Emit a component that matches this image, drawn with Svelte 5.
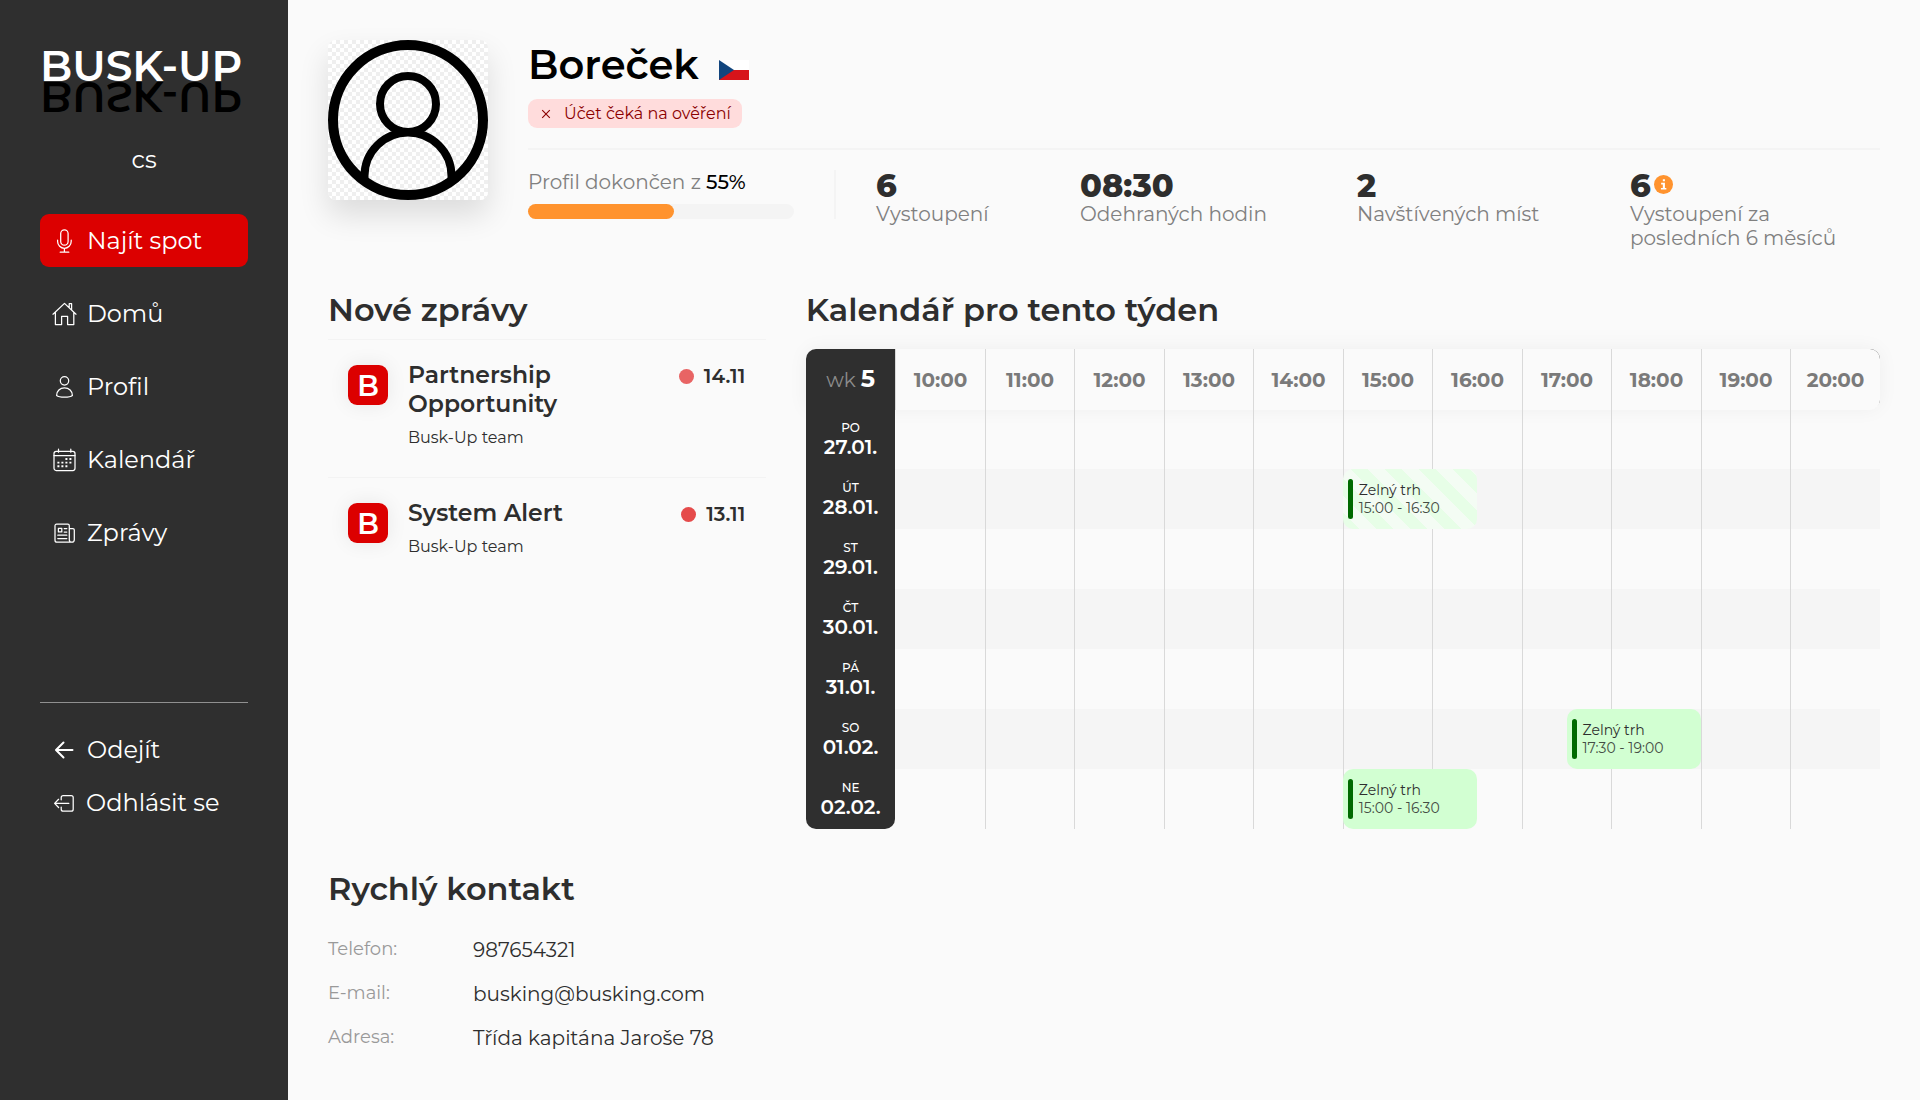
<script>
  const nav = [
    { icon: 'mic', label: 'Najít spot', active: true },
    { icon: 'home', label: 'Domů' },
    { icon: 'user', label: 'Profil' },
    { icon: 'calendar', label: 'Kalendář' },
    { icon: 'news', label: 'Zprávy' }
  ];
  const exits = [
    { icon: 'back', label: 'Odejít' },
    { icon: 'logout', label: 'Odhlásit se' }
  ];
  const completion = 55;
  const stats = [
    { value: '6', label: 'Vystoupení' },
    { value: '08:30', label: 'Odehraných hodin' },
    { value: '2', label: 'Navštívených míst' },
    { value: '6', label: 'Vystoupení za posledních 6 měsíců', info: true }
  ];
  const messages = [
    { title: 'Partnership Opportunity', date: '14.11' },
    { title: 'System Alert', date: '13.11', fresh: true }
  ];
  const hours = ['10:00', '11:00', '12:00', '13:00', '14:00', '15:00', '16:00', '17:00', '18:00', '19:00', '20:00'];
  const days = [
    { name: 'PO', date: '27.01.', events: [] },
    { name: 'ÚT', date: '28.01.', events: [{ from: 15, to: 16.5, time: '15:00 - 16:30', pending: true }] },
    { name: 'ST', date: '29.01.', events: [] },
    { name: 'ČT', date: '30.01.', events: [] },
    { name: 'PÁ', date: '31.01.', events: [] },
    { name: 'SO', date: '01.02.', events: [{ from: 17.5, to: 19, time: '17:30 - 19:00' }] },
    { name: 'NE', date: '02.02.', events: [{ from: 15, to: 16.5, time: '15:00 - 16:30' }] }
  ];
  const contacts = [
    { label: 'Telefon:', value: '987654321' },
    { label: 'E-mail:', value: 'busking@busking.com' },
    { label: 'Adresa:', value: 'Třída kapitána Jaroše 78' }
  ];
  // The first of the twelve columns holds the dates, so 10:00 starts at 1/12.
  const column = (hour) => ((hour - 9) / 12) * 100;
</script>

{#snippet icon(name)}
  <svg class="icon" viewBox="0 0 24 24" aria-hidden="true">
    {#if name === 'mic'}
      <rect x="8.7" y="0.8" width="7.4" height="15.4" rx="3.7" />
      <path d="M5.6 11.2v1.3a6.8 6.8 0 0 0 13.6 0v-1.3M12.4 19.3V23M8.2 23.2h8.6" />
    {:else if name === 'home'}
      <path d="M1 12.2 12.5 1.4 24 12.2M3.4 10.5v12h6.2v-8.2h6v8.2h6.2v-12M17.2 5.5V1.7h2.4V8" />
    {:else if name === 'user'}
      <circle cx="12.5" cy="5.8" r="4.2" />
      <path d="M4.6 20.4c0-4.3 3.4-7.6 7.9-7.6s7.9 3.3 7.9 7.6c-2.6 2.2-13.2 2.2-15.8 0z" />
    {:else if name === 'calendar'}
      <rect x="2" y="3.3" width="21" height="19.2" rx="2.2" />
      <path d="M2 7.6h21M6.5 1.2v3M18.8 1.2v3" />
      <path class="dots" d="M13.4 11h2M17.4 11h2M5.4 14.6h2M9.4 14.6h2M13.4 14.6h2M17.4 14.6h2M5.4 18.3h2M9.4 18.3h2M13.4 18.3h2" />
    {:else if name === 'news'}
      <path d="M20.3 21.2H5a2 2 0 0 1-2-2V4.7a1.5 1.5 0 0 1 1.5-1.5h11.3a1.5 1.5 0 0 1 1.5 1.5v14a2.5 2.5 0 0 0 5 0V9a1.5 1.5 0 0 0-1.5-1.5h-3.5" />
      <path d="M6.4 7.3h3.4v3.6H6.4zM12.2 7.5h2.6M12.2 11h2.6M5.8 14.2h9M5.8 17.5h9" />
    {:else if name === 'back'}
      <path class="bold" d="M20.5 12H4.2M11.5 4.5 4 12l7.5 7.5" />
    {:else}
      <path d="M9.2 8.8V6.6a2 2 0 0 1 2-2h8a2 2 0 0 1 2 2v11.6a2 2 0 0 1-2 2h-8a2 2 0 0 1-2-2V16M16.8 12.4H2.8M6.6 8.3 2.6 12.4l4 4.1" />
    {/if}
  </svg>
{/snippet}

<div class="app">
  <aside>
    <div class="logo">
      <div>BUSK-UP</div>
      <div class="mirror" aria-hidden="true">BUSK-UP</div>
    </div>
    <div class="lang">cs</div>
    <nav>
      {#each nav as item}
        <div class="link" class:active={item.active}>{@render icon(item.icon)}<span>{item.label}</span></div>
      {/each}
    </nav>
    <div class="exits">
      {#each exits as item}
        <div class="link">{@render icon(item.icon)}<span>{item.label}</span></div>
      {/each}
    </div>
  </aside>

  <main>
    <header>
      <svg class="avatar" viewBox="0 0 160 160" aria-hidden="true">
        <defs>
          <pattern id="checker" width="8" height="8" patternUnits="userSpaceOnUse">
            <rect width="8" height="8" fill="#fff" />
            <path d="M0 0h4v4H0zM4 4h4v4H4z" fill="#efefef" />
          </pattern>
        </defs>
        <rect width="160" height="160" fill="url(#checker)" />
        <g fill="none" stroke="#000">
          <circle cx="80" cy="80" r="75" stroke-width="10" />
          <circle cx="80" cy="64" r="28" stroke-width="8" />
          <path d="M36.5 142v-6a43.5 43.5 0 0 1 87 0v6" stroke-width="8" />
        </g>
      </svg>
      <div class="summary">
        <div class="who">
          <h1>Boreček</h1>
          <svg class="flag" viewBox="0 0 30 20" aria-hidden="true">
            <path fill="#fff" d="M0 0h30v10H0z" />
            <path fill="#d7141a" d="M0 10h30v10H0z" />
            <path fill="#11457e" d="M0 0l15 10L0 20z" />
          </svg>
        </div>
        <div class="badge">
          <svg viewBox="0 0 10 10" aria-hidden="true"><path d="M1.2 1.2l7.6 7.6M8.8 1.2l-7.6 7.6" /></svg>
          <span>Účet čeká na ověření</span>
        </div>
        <div class="figures">
          <div class="progress">
            <p>Profil dokončen z <b>{completion}%</b></p>
            <div class="track"><div class="fill" style="width: {completion}%"></div></div>
          </div>
          <div class="stats">
            {#each stats as s}
              <div>
                <div class="value">
                  <span>{s.value}</span>
                  {#if s.info}
                    <svg class="info" viewBox="0 0 20 20" aria-hidden="true">
                      <circle cx="10" cy="10" r="10" />
                      <path d="M9.3 4.5h2.2v2.2H9.3zM7.5 8.2h4v5.4H13v1.7H7.3v-1.7h2V9.9H7.5z" />
                    </svg>
                  {/if}
                </div>
                <div class="label">{s.label}</div>
              </div>
            {/each}
          </div>
        </div>
      </div>
    </header>

    <div class="columns">
      <section class="news">
        <h2>Nové zprávy</h2>
        {#each messages as m}
          <article>
            <div class="mark">B</div>
            <div class="body">
              <h3>{m.title}</h3>
              <p>Busk-Up team</p>
            </div>
            <div class="when"><i class:fresh={m.fresh}></i><span>{m.date}</span></div>
          </article>
        {/each}
      </section>

      <section>
        <h2>Kalendář pro tento týden</h2>
        <div class="calendar">
          <div class="row head">
            <div class="corner"><span>wk</span><b>5</b></div>
            {#each hours as h}<div class="hour">{h}</div>{/each}
          </div>
          {#each days as d}
            <div class="row day">
              <div class="date"><small>{d.name}</small><span>{d.date}</span></div>
              {#each hours as h}<div class="cell"></div>{/each}
              {#each d.events as e}
                <div
                  class="event"
                  class:pending={e.pending}
                  style="left: calc({column(e.from)}% + 0.6px); width: calc({column(e.to) - column(e.from)}% - 0.8px)"
                >
                  <div><span>Zelný trh</span><span class="time">{e.time}</span></div>
                </div>
              {/each}
            </div>
          {/each}
        </div>
      </section>
    </div>

    <section>
      <h2>Rychlý kontakt</h2>
      <dl>
        {#each contacts as c}
          <div><dt>{c.label}</dt><dd>{c.value}</dd></div>
        {/each}
      </dl>
    </section>
  </main>
</div>

<style>
  :global(body) {
    background: #fafafa;
    color: #2e2e2e;
    font-family: Montserrat, Inter, sans-serif;
  }
  h1, h2, h3, p, dl, dd { margin: 0; }
  .app { display: flex; height: 1100px; }

  /* Sidebar */
  aside { width: 208px; flex: none; padding: 45.5px 40px 0; height: 1054.5px; background: #2f2f2f; color: #fff; }
  .logo { font-size: 42.4px; line-height: 40px; font-weight: 600; white-space: nowrap; }
  .mirror { transform: scaleY(-1); color: #000; margin-top: -8.5px; }
  .lang { margin-top: 28px; font-size: 24px; line-height: 29px; text-align: center; }
  nav { display: grid; gap: 20px; margin-top: 40px; }
  .link { display: flex; align-items: center; gap: 11px; height: 53px; padding-left: 12px; border-radius: 9px; font-size: 24px; line-height: 29px; white-space: nowrap; }
  .link.active { background: #dc0000; }
  .icon { width: 24px; height: 24px; flex: none; overflow: visible; fill: none; stroke: #fff; stroke-width: 1.25; stroke-linecap: round; stroke-linejoin: round; }
  .icon .dots { stroke-width: 1.9; stroke-linecap: butt; }
  .icon .bold { stroke-width: 2; }
  .exits { border-top: 1px solid #909090; margin-top: 143px; padding-top: 20px; }
  .exits .link:last-child { gap: 10px; }

  main { flex: 1; padding: 40px 40px 0; }

  /* Profile header */
  header { display: flex; gap: 40px; height: 250px; }
  .avatar { width: 160px; height: 160px; border-radius: 8px; flex: none; box-shadow: 0 15px 30px rgba(0, 0, 0, 0.12); }
  .summary { flex: 1; }
  .who { display: flex; gap: 20px; height: 59px; }
  h1 { font-size: 40px; line-height: 49px; font-weight: 600; color: #000; }
  .flag { width: 30px; height: 20px; margin-top: 20px; }
  .badge { display: flex; align-items: center; width: 214px; height: 29px; box-sizing: border-box; padding-left: 13px; border-radius: 9px; background: #ffdcdc; color: #8b0000; font-size: 16px; line-height: 19px; white-space: nowrap; }
  .badge svg { width: 10px; height: 10px; margin: 1px 13px 0 0; stroke: #8b0000; stroke-width: 1.1; }
  .figures { display: flex; margin-top: 20px; border-top: 2px solid #f4f4f4; padding-top: 20px; }
  .progress { width: 266px; height: 49px; padding-right: 40px; border-right: 2px solid #f4f4f4; font-size: 20px; line-height: 24px; color: #808080; white-space: nowrap; }
  .progress b { color: #000; font-weight: 500; }
  .track { height: 15px; margin-top: 10px; border-radius: 8px; background: #f4f4f4; }
  .fill { height: 100%; border-radius: 8px; background: #ff932e; }
  .stats { flex: 1; display: grid; grid-template-columns: 204px 277px 273px auto; padding-left: 40px; }
  .value { display: flex; font-size: 32px; line-height: 32px; font-weight: 800; }
  .info { width: 19px; height: 19px; margin: 5px 0 0 3px; fill: #ff932e; }
  .info path { fill: #fff; }
  .label { font-size: 20px; line-height: 24px; color: #808080; max-width: 212px; }

  /* Messages */
  .columns { display: grid; grid-template-columns: 437.8px 1074px; gap: 40px; height: 579px; }
  h2 { font-size: 32px; line-height: 39px; font-weight: 600; }
  .news h2 { margin-bottom: 10px; }
  article { display: flex; border-top: 1px solid #f3f3f3; padding: 20px 20.5px 30px 20px; }
  .mark { width: 40px; height: 40px; margin-top: 5px; border-radius: 9px; background: #dc0000; color: #fff; font-size: 28.5px; line-height: 42px; font-weight: 600; text-align: center; box-shadow: 0 0 20px rgba(0, 0, 0, 0.08); }
  .body { width: 180px; margin-left: 20px; }
  h3 { font-size: 23.5px; line-height: 29px; font-weight: 600; }
  article p { margin-top: 10px; font-size: 16px; line-height: 19px; }
  .when { display: flex; align-items: center; gap: 10px; height: 24px; margin: 4px 0 0 auto; font-size: 20px; line-height: 24px; font-weight: 600; }
  .when i { width: 15px; height: 15px; border-radius: 50%; background: #e86464; }
  .when i.fresh { background: #e54b4b; }

  /* Calendar */
  .calendar { margin-top: 20px; }
  .row { display: grid; grid-template-columns: repeat(12, 1fr); height: 60px; }
  .head { position: relative; border-radius: 10px 10px 10px 0; background: #2f2f2f; box-shadow: 0 0 20px rgba(0, 0, 0, 0.05); }
  .corner { display: flex; justify-content: center; align-items: baseline; gap: 5px; line-height: 60px; font-size: 20px; color: #8c8c8c; }
  .corner b { font-size: 24px; font-weight: 700; color: #fff; }
  .hour { display: grid; place-items: center; background: #fafafa; border-left: 1px solid #d9d9d9; font-size: 20px; line-height: 24px; font-weight: 700; color: #7a7a7a; }
  .hour:last-child { border-radius: 0 10px 10px 0; }
  .day { position: relative; }
  .day:nth-child(odd) { background: #f5f5f5; }
  .cell { border-left: 1px solid #d9d9d9; }
  .date + .cell { border-left-color: transparent; }
  .date { background: #2f2f2f; color: #fff; text-align: center; }
  .day:last-child .date { border-radius: 0 0 10px 10px; }
  .date small { display: block; margin-top: 11px; font-size: 12px; line-height: 15px; font-weight: 500; }
  .date span { display: block; font-size: 20px; line-height: 24px; font-weight: 600; }
  .event { position: absolute; top: 0; box-sizing: border-box; height: 60px; padding: 10px 0 0 5px; border-radius: 10px; background: #d2ffd2; }
  .event > div { position: relative; height: 38px; padding: 2px 0 0 10.4px; font-size: 14px; line-height: 18px; }
  .event > div::before { content: ''; position: absolute; left: 0; top: 0; width: 5px; height: 40px; border-radius: 2.5px; background: #006a00; }
  .event.pending { background: repeating-linear-gradient(45deg, #e7fee7 0 12px, #f4fcf4 12px 24px); }
  .event span { display: block; }
  .event .time { color: #454d45; }

  /* Contact */
  dl { margin-top: 30px; }
  dl div { display: flex; height: 44px; }
  dt { width: 145px; font-size: 18px; line-height: 22px; color: #999; }
  dd { font-size: 20px; line-height: 24px; }
</style>
